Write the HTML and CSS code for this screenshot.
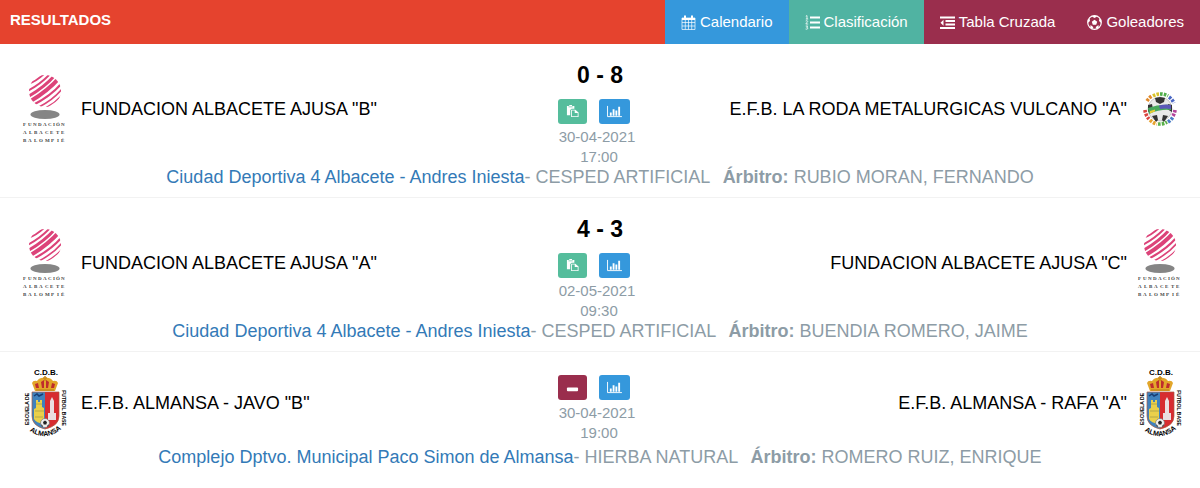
FILE: index.html
```html
<!DOCTYPE html>
<html lang="es">
<head>
<meta charset="utf-8">
<title>Resultados</title>
<meta name="viewport" content="width=device-width, initial-scale=1">
<link rel="stylesheet" href="styles.css">
</head>
<body>
<svg class="defs" aria-hidden="true">
  <symbol id="albacete" viewBox="0 0 66 70">
    <clipPath id="ball"><circle cx="33" cy="17" r="16"/></clipPath>
    <g clip-path="url(#ball)" fill="none" stroke="#dc4379">
      <path d="M16 10Q25 7 33 -1" stroke-width="1.800"/>
      <path d="M15 17Q28 11 40 -2" stroke-width="2"/>
      <path d="M15 23Q32 14 44 0" stroke-width="3"/>
      <path d="M17 28Q36 17 48 3" stroke-width="4"/>
      <path d="M21 31Q39 22 50 9" stroke-width="2.200"/>
      <path d="M25 34Q41 26 50 15" stroke-width="1.600"/>
      <path d="M31 35Q42 30 50 21" stroke-width="1.200"/>
    </g>
    <ellipse cx="33" cy="40.500" rx="14.500" ry="4.500" fill="#858585"/>
    <g class="albacete-text">
      <text x="11 16 21 26 31 36 41 44 49" y="52">FUNDACIÓN</text>
      <text x="11 17 22 27 33 38 44 49" y="60">ALBACETE</text>
      <text x="11 16 22 27 33 39 45 49" y="68">BALOMPIÉ</text>
    </g>
  </symbol>
  <symbol id="roda" viewBox="0 0 66 70">
    <circle cx="33" cy="35" r="12" fill="#e9e9e9" stroke="#aaa" stroke-width=".6"/>
    <path d="M28 24l5-1 5 1-1 4-4 2-4-2zM21 31l4-1 1 5-5 3zM45 31l-4-1-1 5 5 3zM25 42l5-1 1 5-2 2zM41 42l-5-1-1 5 2 2z" fill="#333"/>
    <g fill="none" stroke-width="3.600" stroke-dasharray="2.600 1.200">
      <path d="M20 27A15 15 0 0 1 25 22" stroke="#e08a2c"/>
      <path d="M26 22A15 15 0 0 1 32 20" stroke="#d9c32c"/>
      <path d="M33 20A15 15 0 0 1 41 22" stroke="#4fae4a"/>
      <path d="M42 23A15 15 0 0 1 47 29" stroke="#4a67c4"/>
      <path d="M18 36A15 15 0 0 0 22 45" stroke="#d9433f"/>
      <path d="M23 46A15 15 0 0 0 30 50" stroke="#e7a32f"/>
      <path d="M31 50A15 15 0 0 0 40 48" stroke="#5ab04a"/>
      <path d="M41 48A15 15 0 0 0 46 43" stroke="#4a7cc4"/>
      <path d="M46 42A15 15 0 0 0 48 36" stroke="#b34299"/>
    </g>
    <path d="M21 34Q32 30 44 31v5Q33 35 22 40z" fill="#47a85c"/>
    <path d="M32 31.500Q38 30 44 31v4q-6-1-11 0z" fill="#5b58b8"/>
    <path d="M23 37l5-1.500v2l-5 2z" fill="#e6cd35"/>
  </symbol>
  <symbol id="almansa" viewBox="0 0 66 70">
    <text class="crest-title" x="34" y="7">C.D.B.</text>
    <path d="M23 23L20 15q1-3 5-2 3-4 8-3 5-1 8 3 4-1 5 2l-3 8z" fill="#e2a62b"/>
    <path d="M24 20l-1-4 3-1 1 5zM30 20l-1-6 3-2v8zM34 20v-8l3 2-1 6zM39 20l1-5 3 1-1 4z" fill="#bf2c2d"/>
    <path d="M33 8v5M31 10h4M24 22h18" stroke="#c98a1c" stroke-width="1.500"/>
    <path d="M20 24h13v37q-13-3-13-13z" fill="#3f82bd"/>
    <path d="M33 24h14v24q0 10-14 13z" fill="#d72c30"/>
    <path d="M20 24h27v24q0 10-14 13-13-3-13-13z" fill="none" stroke="#a95a41" stroke-width=".7"/>
    <path d="M22 51v-10l2-1v-8h2v2h2v-2h2v7l2 1v16q-8-1-10-5z" fill="#ead04a"/>
    <path d="M24 36h6M23 43h9M23 49h8" stroke="#9e9a48" stroke-width=".7"/>
    <path d="M22 28l3-2 2 2 4-2" fill="none" stroke="#173c73" stroke-width="1.500"/>
    <path d="M38 51V33l2-4 2 4v18zM36 45h8v7h-8z" fill="#eadfe1"/>
    <circle cx="33" cy="55" r="4.500" fill="#eee" stroke="#666" stroke-width=".6"/>
    <path d="M31 54l2-1.500 2 1.500-.7 2.500h-2.600zM29 56l2 2-1 1zM37 56l-2 2 1 1z" fill="#222"/>
    <text class="crest-side" transform="translate(17 41) rotate(-90)">ESCUELA DE</text>
    <text class="crest-side" transform="translate(50 40) rotate(90)">FUTBOL BASE</text>
    <path id="crest-arc" d="M15 61Q33 76 52 59" fill="none"/>
    <text class="crest-name"><textPath href="#crest-arc" startOffset="50%">ALMANSA</textPath></text>
  </symbol>
  <symbol id="i-paste" viewBox="0 0 14 14">
    <path d="M1 1h2.500V0h3v1H9v3H6L4.500 5.500V11H1z" fill="#fff"/>
    <path d="M5.500 5h4.500l3.500 3v5h-8z" fill="#fff"/>
    <path d="M6.400 5.900h3v2.700h3.200v3.600H6.400z" fill="#55bd9c"/>
    <path d="M2.700 2h4.600" stroke="#55bd9c" stroke-width=".7"/>
  </symbol>
  <symbol id="i-chart" viewBox="0 0 16 14">
    <path d="M.5 1v11.500H16" fill="none" stroke="#fff"/>
    <path d="M3 8h2v3.500H3zM6 4.500h2v7H6zM9 6h2v5.500H9zM12 2h2v9.500h-2z" fill="#fff"/>
  </symbol>
</svg>

<header class="bar">
  <h1 class="bar-title">RESULTADOS</h1>
  <nav class="tabs">
    <a class="tab tab-blue" href="#calendario">
      <svg class="tab-icon" viewBox="0 0 15 15" fill="none" stroke="#fff"><path d="M1 3h13v11.500H1zM1 7.500h13M1 11h13M4.300 5v9.500M7.500 5v9.500M10.700 5v9.500" stroke-width=".7"/><path d="M1 4h13" stroke-width="2"/><path d="M4 .5v3M11 .5v3" stroke-width="2"/></svg>
      Calendario</a>
    <a class="tab tab-teal" href="#clasificacion">
      <svg class="tab-icon" viewBox="0 0 15 15" fill="none" stroke="#fff"><path d="M5 2.500h10M5 7.500h10M5 12.500h10" stroke-width="2"/><path d="M.8 1.200L2 .6V4M.8 4h2.400M.7 6q2-.8 2 .4L.8 9h2.400M.7 11h2L1.600 12.300q1.500 0 1.200 1.300-.6 1-2.200.4" stroke-width=".8"/></svg>
      Clasificación</a>
    <a class="tab tab-wine" href="#tabla">
      <svg class="tab-icon" viewBox="0 0 15 15"><path d="M0 1.500h15v2H0zM5.500 5h9.500v2H5.500zM5.500 8.500h9.500v2H5.500zM0 12h15v2H0zM3.500 4.800v6L.5 7.800z" fill="#fff"/></svg>
      Tabla Cruzada</a>
    <a class="tab tab-wine" href="#goleadores">
      <svg class="tab-icon" viewBox="0 0 15 15"><circle cx="7.500" cy="7.500" r="6.800" fill="none" stroke="#fff" stroke-width="1.200"/><path d="M7.500 4.700l2.700 2-1 3.100H5.800l-1-3.100zM4.800 1.400l2.700 1.500 2.700-1.500-2.700-.8zM.8 8l2.200-2-.5-2.700L1 5zM14.200 8L12 6l.5-2.700L14 5zM3.200 12.700l.4-2.700 2.600 2-.2 1.800zM11.800 12.700l-.4-2.700-2.600 2 .2 1.800z" fill="#fff"/></svg>
      Goleadores</a>
  </nav>
</header>

<main>
  <article class="match">
    <div class="match-main">
      <div class="team home"><svg class="logo" role="img" aria-label="Escudo Fundación Albacete"><use href="#albacete"/></svg><span>FUNDACION ALBACETE AJUSA "B"</span></div>
      <div class="center">
        <strong class="score">0 - 8</strong>
        <div class="actions">
          <button class="btn btn-green" type="button" aria-label="Acta"><svg class="btn-icon"><use href="#i-paste"/></svg></button>
          <button class="btn btn-blue" type="button" aria-label="Estadísticas"><svg class="btn-icon wide"><use href="#i-chart"/></svg></button>
        </div>
        <time class="date">30-04-2021</time>
        <time class="hour">17:00</time>
      </div>
      <div class="team away"><span>E.F.B. LA RODA METALURGICAS VULCANO "A"</span><svg class="logo" role="img" aria-label="Escudo La Roda"><use href="#roda"/></svg></div>
    </div>
    <p class="venue"><a href="#campo">Ciudad Deportiva 4 Albacete - Andres Iniesta</a>- CESPED ARTIFICIAL <b class="referee">Árbitro:</b> RUBIO MORAN, FERNANDO</p>
  </article>

  <article class="match">
    <div class="match-main">
      <div class="team home"><svg class="logo" role="img" aria-label="Escudo Fundación Albacete"><use href="#albacete"/></svg><span>FUNDACION ALBACETE AJUSA "A"</span></div>
      <div class="center">
        <strong class="score">4 - 3</strong>
        <div class="actions">
          <button class="btn btn-green" type="button" aria-label="Acta"><svg class="btn-icon"><use href="#i-paste"/></svg></button>
          <button class="btn btn-blue" type="button" aria-label="Estadísticas"><svg class="btn-icon wide"><use href="#i-chart"/></svg></button>
        </div>
        <time class="date">02-05-2021</time>
        <time class="hour">09:30</time>
      </div>
      <div class="team away"><span>FUNDACION ALBACETE AJUSA "C"</span><svg class="logo" role="img" aria-label="Escudo Fundación Albacete"><use href="#albacete"/></svg></div>
    </div>
    <p class="venue"><a href="#campo">Ciudad Deportiva 4 Albacete - Andres Iniesta</a>- CESPED ARTIFICIAL <b class="referee">Árbitro:</b> BUENDIA ROMERO, JAIME</p>
  </article>

  <article class="match">
    <div class="match-main">
      <div class="team home"><svg class="logo" role="img" aria-label="Escudo Almansa"><use href="#almansa"/></svg><span>E.F.B. ALMANSA - JAVO "B"</span></div>
      <div class="center pending">
        <div class="actions">
          <button class="btn btn-wine" type="button" aria-label="Sin acta"><svg class="btn-icon" viewBox="0 0 14 14"><rect x="1" y="7" width="12" height="4" rx="1" fill="#fff"/></svg></button>
          <button class="btn btn-blue" type="button" aria-label="Estadísticas"><svg class="btn-icon wide"><use href="#i-chart"/></svg></button>
        </div>
        <time class="date">30-04-2021</time>
        <time class="hour">19:00</time>
      </div>
      <div class="team away"><span>E.F.B. ALMANSA - RAFA "A"</span><svg class="logo" role="img" aria-label="Escudo Almansa"><use href="#almansa"/></svg></div>
    </div>
    <p class="venue"><a href="#campo">Complejo Dptvo. Municipal Paco Simon de Almansa</a>- HIERBA NATURAL <b class="referee">Árbitro:</b> ROMERO RUIZ, ENRIQUE</p>
  </article>
</main>
</body>
</html>
```

FILE: styles.css
```css
* { box-sizing: border-box; }

body {
  margin: 0;
  background: #fff;
  color: #000;
  font-family: "Liberation Sans", Arial, Helvetica, sans-serif;
  font-size: 18px;
  line-height: 20px;
}

.defs { position: absolute; width: 0; height: 0; }

.bar {
  display: flex;
  justify-content: space-between;
  background: #e5432e;
  color: #fff;
}
.bar-title {
  margin: 0;
  padding: 10px;
  font-size: 15px;
  line-height: 20px;
}
.tabs { display: flex; }
.tab {
  display: flex;
  align-items: center;
  gap: 4px;
  padding: 12px 16px;
  color: #fff;
  font-size: 15px;
  line-height: 20px;
  text-decoration: none;
}
.tab-icon { width: 15px; height: 15px; }
.tab-blue { background: #3598dc; }
.tab-teal { background: #50b3a2; }
.tab-wine { background: #9a2e4d; }

.match {
  padding: 6px 7px 10px;
  border-bottom: 1px solid #f2f2f2;
}
.match:last-child { border-bottom: 0; }
.match-main {
  display: grid;
  grid-template-columns: 1fr 90px 1fr;
  align-items: center;
}
.team {
  display: flex;
  align-items: center;
}
.home {
  gap: 3px;
  padding-left: 5px;
}
.away { justify-content: flex-end; }
.logo {
  flex: none;
  width: 66px;
  height: 70px;
}

.center {
  display: flex;
  flex-direction: column;
  align-items: center;
  color: #8d9ca6;
  font-size: 15px;
}
.pending { padding: 17px 0 4px; }
.score {
  padding-top: 2px;
  color: #000;
  font-size: 23px;
  line-height: 47px;
}
.actions {
  display: flex;
  gap: 12px;
  padding: 0 12px 3px 0;
}
.btn {
  display: flex;
  align-items: center;
  justify-content: center;
  height: 25px;
  padding: 0 8px;
  border: 0;
  border-radius: 3px;
}
.btn-icon { width: 13px; height: 13px; }
.btn-icon.wide { width: 15px; }
.btn-green { background: #55bd9c; }
.btn-blue { background: #3598dc; }
.btn-wine { background: #9a2e4d; }
.date { padding-right: 6px; }
.hour { padding-right: 2px; }

.venue {
  margin: 0;
  color: #8d9ca6;
  text-align: center;
}
.venue a {
  color: #337ab7;
  text-decoration: none;
}
.referee { margin-left: 8px; }

.albacete-text {
  fill: #444;
  font: bold 5px "Liberation Serif", serif;
}
.crest-title {
  font: bold 8px "Liberation Sans", sans-serif;
  text-anchor: middle;
}
.crest-side {
  font: bold 5px "Liberation Sans", sans-serif;
  text-anchor: middle;
}
.crest-name {
  font: bold 7px "Liberation Sans", sans-serif;
  text-anchor: middle;
}
```
